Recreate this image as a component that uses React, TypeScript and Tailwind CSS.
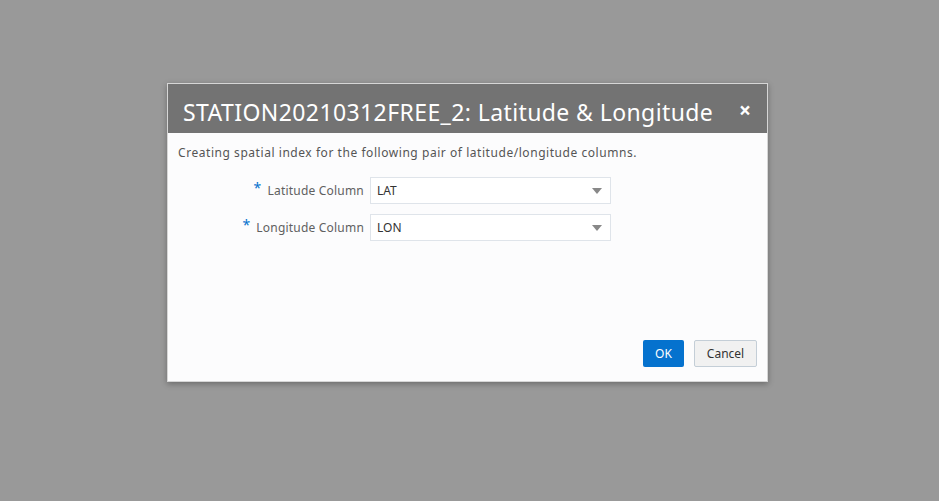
import { useState } from 'react';

const Field = ({ label, value }: { label: string; value: string }) => (
    <div className="flex items-center h-[27px]">
        <div className="w-[192px] flex justify-end items-center pr-[6px] text-[12px] text-[#606060] tracking-[0.2px]">
            <span className="text-[#0572ce] text-[14px] mr-[6px] -mt-[6px]">*</span>
            <span>{label}</span>
        </div>
        <div className="w-[241px] h-[27px] border border-[#dfe4ea] bg-white flex items-center justify-between pl-[6px] pr-[8px]">
            <span className="text-[12px] text-[#333]">{value}</span>
            <svg width="10" height="6" viewBox="0 0 10 6">
                <path d="M0 0 L10 0 L5 6 Z" fill="#888" />
            </svg>
        </div>
    </div>
);

const App = () => {
    const [open] = useState(true);
    return (
        <div className="w-[939px] h-[501px] bg-[#999999] flex justify-start pl-[167px] pt-[83px]" style={{ fontFamily: '"Noto Sans", "Open Sans", sans-serif' }}>
            {open && (
                <div className="w-[601px] h-[299px] border border-[#d6d6d6] bg-[#fcfcfd] flex flex-col shadow-[0_2px_6px_rgba(0,0,0,0.3)]">
                    <div className="h-[49px] bg-[#737373] flex items-center justify-between pl-[15px] pr-[16px]">
                        <h1 className="text-white text-[23px] leading-none tracking-[0.4px] mt-[7px]">STATION20210312FREE_2: Latitude &amp; Longitude</h1>
                        <span className="text-white text-[21px] font-bold leading-none mt-[4px]">×</span>
                    </div>
                    <div className="flex-1 flex flex-col px-[10px] pt-[14px] pb-[14px]">
                        <p className="text-[12px] text-[#555] leading-none tracking-[0.55px]">Creating spatial index for the following pair of latitude/longitude columns.</p>
                        <div className="flex flex-col gap-[10px] mt-[18px]">
                            <Field label="Latitude Column" value="LAT" />
                            <Field label="Longitude Column" value="LON" />
                        </div>
                        <div className="mt-auto flex justify-end gap-[10px]">
                            <button className="h-[27px] w-[41px] bg-[#0572ce] text-white text-[12px] rounded-[2px]">OK</button>
                            <button className="h-[27px] w-[63px] bg-[#f1f1f1] border border-[#c4ced7] text-[#333] text-[12px] rounded-[2px]">Cancel</button>
                        </div>
                    </div>
                </div>
            )}
        </div>
    );
};

export default App;
